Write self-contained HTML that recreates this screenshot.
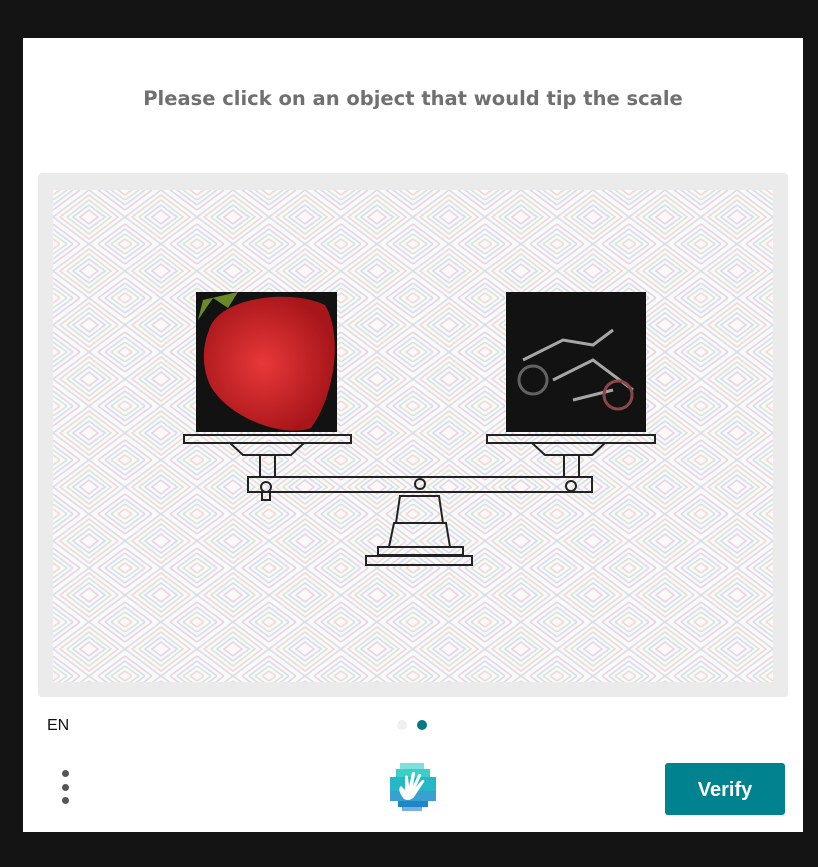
<!DOCTYPE html>
<html><head><meta charset="utf-8"><style>
html,body{margin:0;padding:0;background:#141414;width:818px;height:867px;overflow:hidden;font-family:"Liberation Sans",sans-serif}
.card{position:absolute;left:23px;top:38px;width:780px;height:794px;background:#fff}
.title{position:absolute;left:0;right:0;top:49px;text-align:center;font-family:"DejaVu Sans",sans-serif;font-size:19.5px;font-weight:bold;color:#707070;letter-spacing:0}
.panel{position:absolute;left:15px;top:135px;width:750px;height:524px;background:#ebebeb;border-radius:4px}
.img{position:absolute;left:15px;top:17px;width:720px;height:492px}
.en{position:absolute;left:24px;top:679px;font-size:16px;color:#111}
.dot{position:absolute;width:10px;height:10px;border-radius:50%}
.v{position:absolute;left:642px;top:725px;width:120px;height:52px;background:#00838f;border-radius:3px;color:#fff;font-size:20px;font-weight:bold;text-align:center;line-height:54px}
.m{position:absolute;left:39px;width:7px;height:7px;border-radius:50%;background:#555}
</style></head><body>
<div class="card">
<div class="title">Please click on an object that would tip the scale</div>
<div class="panel">
<svg class="img" viewBox="0 0 720 492" width="720" height="492">
<defs>
<pattern id="p" width="72" height="54" patternUnits="userSpaceOnUse">
<rect width="72" height="54" fill="#f9f9f9"/>
<g fill="none" stroke-width="1.6">
<path d="M36 0 L72 27 L36 54 L0 27Z" stroke="#dcdce4"/>
<path d="M36 5 L65 27 L36 49 L7 27Z" stroke="#efd8d8"/>
<path d="M36 10 L58 27 L36 44 L14 27Z" stroke="#d8e4d8"/>
<path d="M36 15 L52 27 L36 39 L20 27Z" stroke="#d6dcf0"/>
<path d="M36 20 L45 27 L36 34 L27 27Z" stroke="#e8d4e0"/>
<path d="M0 5 L7 0 M72 5 L65 0 M0 49 L7 54 M72 49 L65 54" stroke="#efd8d8"/>
<path d="M0 10 L14 0 M72 10 L58 0 M0 44 L14 54 M72 44 L58 54" stroke="#d8e4d8"/>
<path d="M0 15 L20 0 M72 15 L52 0 M0 39 L20 54 M72 39 L52 54" stroke="#d6dcf0"/>
<path d="M0 20 L27 0 M72 20 L45 0 M0 34 L27 54 M72 34 L45 54" stroke="#e8d4e0"/>
</g>
</pattern>
<radialGradient id="s" cx="45%" cy="50%" r="55%"><stop offset="0" stop-color="#e8383a"/><stop offset="1" stop-color="#a8161a"/></radialGradient>
</defs>
<rect width="720" height="492" fill="url(#p)"/>
<rect x="143" y="102" width="141" height="140" fill="#121212"/>
<path d="M156 140 C165 108 235 98 272 115 C290 145 282 205 258 238 C230 248 175 228 157 195 C148 175 150 155 156 140Z" fill="url(#s)"/>
<path d="M145 130 L160 108 L175 118 L185 102 L150 110Z" fill="#6a8a2a"/>
<rect x="453" y="102" width="140" height="140" fill="#121212"/>
<g stroke="#ccc" stroke-width="3" fill="none" opacity=".8"><path d="M470 170 L510 150 L540 155 L560 140 M500 190 L540 170 L580 200 M520 210 L560 200"/><circle cx="480" cy="190" r="14" stroke="#777"/><circle cx="565" cy="205" r="14" stroke="#a55"/></g>
<g fill="none" stroke="#222" stroke-width="2">
<rect x="131" y="245" width="167" height="8"/>
<path d="M177 253 L190 265 L238 265 L251 253"/>
<rect x="207" y="265" width="15" height="22"/>
<rect x="434" y="245" width="168" height="8"/>
<path d="M479 253 L492 265 L539 265 L552 253"/>
<rect x="511" y="265" width="15" height="22"/>
<rect x="195" y="287" width="344" height="15"/>
<circle cx="213" cy="297" r="5"/><rect x="209" y="302" width="8" height="8"/>
<circle cx="367" cy="294" r="5"/><circle cx="518" cy="296" r="5"/>
<path d="M347 306 L386 306 L390 333 L343 333Z"/>
<path d="M341 333 L393 333 L397 357 L336 357Z"/>
<rect x="325" y="357" width="85" height="8"/>
<rect x="313" y="366" width="106" height="9"/>
</g>
</svg>
</div>
<div class="en">EN</div>
<div class="dot" style="left:374px;top:682px;background:#f0f0f0"></div>
<div class="dot" style="left:394px;top:682px;background:#007a85"></div>
<div class="m" style="top:732px"></div><div class="m" style="top:746px"></div><div class="m" style="top:759px"></div>
<svg style="position:absolute;left:365px;top:723px" width="52" height="52" viewBox="0 0 52 52">
<rect x="12" y="2" width="24" height="8" fill="#7de0dc"/>
<rect x="8" y="8" width="34" height="10" fill="#3ccfc8"/>
<rect x="2" y="16" width="46" height="14" fill="#25b7c6"/>
<rect x="2" y="30" width="46" height="10" fill="#3aa0d0"/>
<rect x="10" y="40" width="30" height="6" fill="#1f86c8"/>
<rect x="14" y="46" width="20" height="4" fill="#7ab0e0"/>
<path d="M16 38 C11 32 10 27 13 25 L17 29 L17 16 C17 14 20 14 20 16 L21 25 L24 12 C25 10 28 11 27 13 L25 25 L30 14 C31 12 34 13 33 15 L28 26 L34 19 C36 18 37 20 36 21 L28 33 C25 39 20 40 16 38Z" fill="#fff"/>
</svg>
<div class="v">Verify</div>
</div>
</body></html>
